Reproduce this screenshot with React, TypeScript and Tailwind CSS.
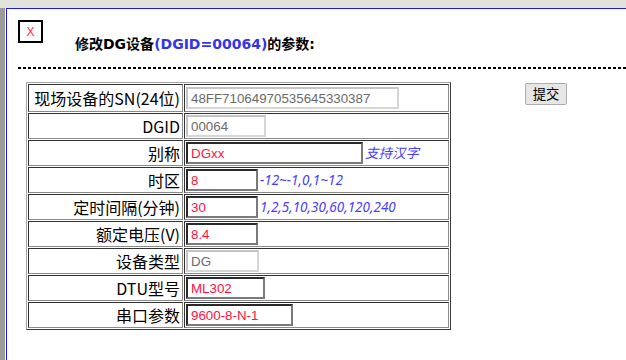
import React from 'react';

type Row = {
  label: string;
  value: string;
  width: number;
  readOnly?: boolean;
  hint?: string;
};

const rows: Row[] = [
  { label: '现场设备的SN(24位)', value: '48FF71064970535645330387', width: 213, readOnly: true },
  { label: 'DGID', value: '00064', width: 80, readOnly: true },
  { label: '别称', value: 'DGxx', width: 177, hint: '支持汉字' },
  { label: '时区', value: '8', width: 72, hint: '-12~-1,0,1~12' },
  { label: '定时间隔(分钟)', value: '30', width: 72, hint: '1,2,5,10,30,60,120,240' },
  { label: '额定电压(V)', value: '8.4', width: 72 },
  { label: '设备类型', value: 'DG', width: 73, readOnly: true },
  { label: 'DTU型号', value: 'ML302', width: 79 },
  { label: '串口参数', value: '9600-8-N-1', width: 107 },
];

function Field({ row }: { row: Row }) {
  const base =
    "h-[22px] border-2 pl-[3px] text-[13.33px] font-['Liberation_Sans',Arial,sans-serif] outline-none bg-white";
  const cls = row.readOnly
    ? base + ' border-[#d6d6d6] border-t-[#c4c4c4] border-l-[#c4c4c4] text-[#6a6a6a]'
    : base + ' border-[#7a7a7a] border-t-[#2a2a2a] border-l-[#2a2a2a] text-[#ff1040]';
  return (
    <div className="flex items-center">
      <input className={cls} style={{ width: row.width }} defaultValue={row.value} readOnly={row.readOnly} />
      {row.hint && (
        <span className="ml-[2px] text-[13.5px] italic text-[#4a3cff] font-['Noto_Sans','Noto_Sans_CJK_SC',sans-serif]">
          {row.hint}
        </span>
      )}
    </div>
  );
}

export default function App() {
  return (
    <div className="w-[626px] h-[360px] overflow-hidden bg-[#e2e2dd] pt-[8px]">
      <div className="h-[352px] border-l-[5px] border-[#9a9a9a] pl-[1px] bg-white">
        <div className="h-full bg-white border-t border-l border-[#1c1ce0] pt-[11px] pl-[11px]">
          <div className="flex items-start">
            <div className="w-[25px] h-[23px] border-2 border-black flex items-center justify-center text-[12px] leading-none text-[#ff2a4a] font-['Liberation_Sans',Arial,sans-serif]">
              X
            </div>
            <div className="ml-[32px] mt-[15px] leading-[18px] text-[14px] font-bold text-black font-['DejaVu_Sans','Noto_Sans_CJK_SC',sans-serif]">
              修改DG设备<span className="text-[#3434ea]">(DGID=00064)</span>的参数:
            </div>
          </div>

          <div className="mt-[14px] h-[2px] bg-[repeating-linear-gradient(to_right,#000_0,#000_3px,transparent_3px,transparent_5px)]" />

          <div className="flex items-start mt-[13px] ml-[8px]">
            <table className="border-separate border-spacing-[1px] border border-[#3a3a3a] border-t-[#a4a4a4] border-l-[#a4a4a4]">
              <tbody>
                {rows.map((row, i) => (
                  <tr key={row.label}>
                    <td
                      className={
                        'w-[155px] p-[1px] pr-[2px] align-middle text-right text-[16px] leading-[20px] text-black border border-[#8a8a8a] border-t-[#333] border-l-[#333] font-[\'Noto_Sans_CJK_SC\',sans-serif] ' +
                        (i === 0 ? 'h-[28px]' : 'h-[26px]')
                      }
                    >
                      {row.label}
                    </td>
                    <td className="w-[265px] p-[1px] align-middle border border-[#8a8a8a] border-t-[#333] border-l-[#333]">
                      <Field row={row} />
                    </td>
                  </tr>
                ))}
              </tbody>
            </table>

            <button className="ml-[74px] mt-[1px] w-[42px] h-[22px] border border-[#adadad] rounded-[2px] bg-[#e6e6e6] text-[13.33px] leading-none text-black font-['Noto_Sans_CJK_SC',sans-serif]">
              提交
            </button>
          </div>
        </div>
      </div>
    </div>
  );
}
